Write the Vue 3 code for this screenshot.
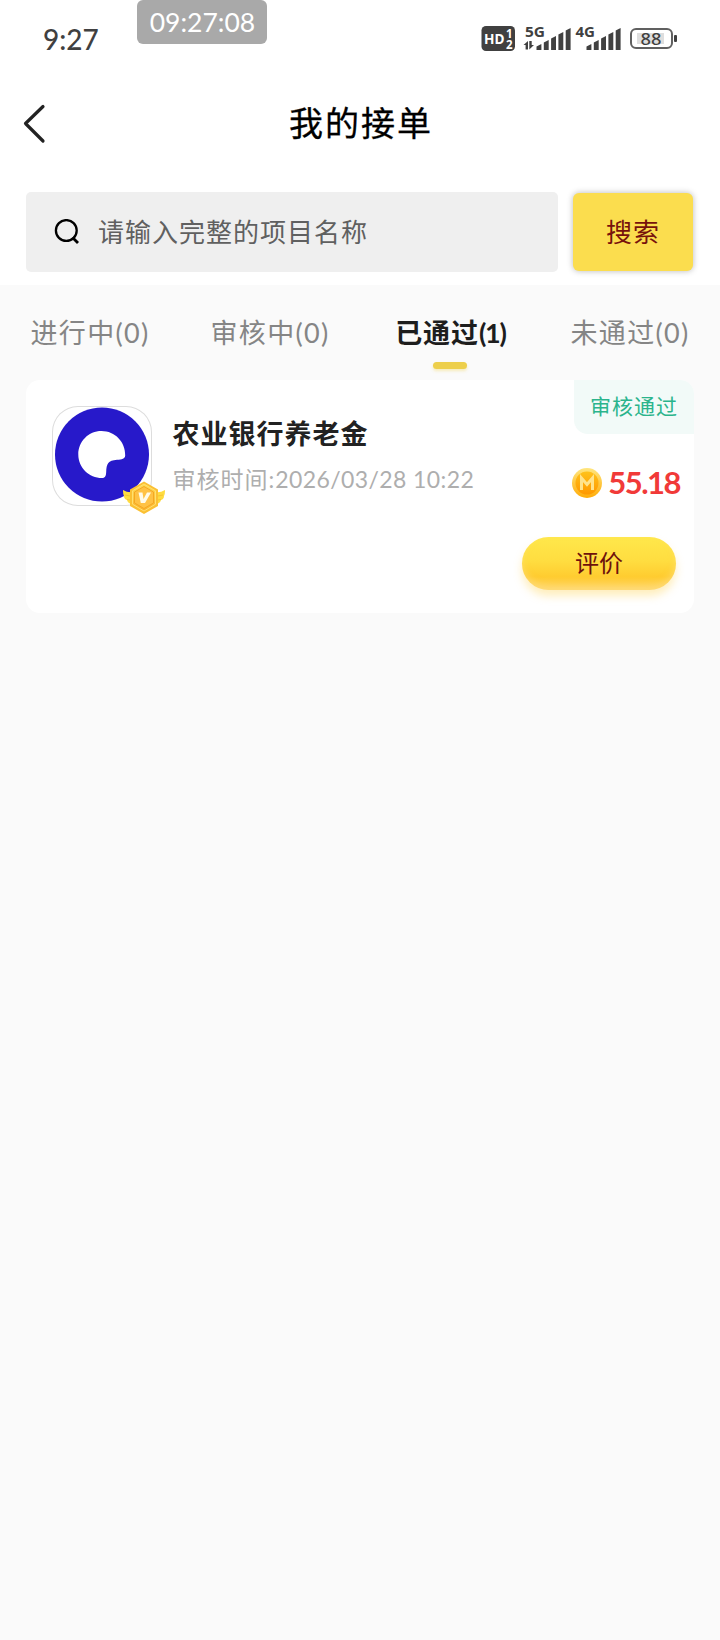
<script setup>
import { ref } from 'vue'

const tabs = [
  { label: '进行中', count: 0 },
  { label: '审核中', count: 0 },
  { label: '已通过', count: 1 },
  { label: '未通过', count: 0 },
]
const active = ref(2)
const bars = [6, 10, 14, 18, 22]
</script>

<template>
  <div class="screen">
    <header class="top">
      <div class="status">
        <span class="clock">9:27</span>
        <span class="stamp">09:27:08</span>
        <svg class="signals" width="200" height="34" viewBox="480 20 200 34">
          <rect x="481.5" y="26" width="33.5" height="25" rx="4.5" fill="#404040" />
          <g fill="#fff" font-weight="700">
            <text x="484" y="43.5" font-size="15" textLength="20.5" lengthAdjust="spacingAndGlyphs">HD</text>
            <text x="506" y="37.5" font-size="11.5">1</text>
            <text x="506" y="48.5" font-size="11.5">2</text>
          </g>
          <g fill="#404040" font-weight="700">
            <text x="525" y="37" font-size="14.5" textLength="20" lengthAdjust="spacingAndGlyphs">5G</text>
            <text x="575.5" y="37" font-size="14.5" textLength="19.5" lengthAdjust="spacingAndGlyphs">4G</text>
            <path d="M523.500 45l4.500-4v8.500h-2.400v-4.500zM529.300 41v8.500l4.700-4.500h-2.300v-4z" />
            <path v-for="(h, i) in bars" :key="'a' + i" :d="`M${536.5 + i * 7.3} 50v${-h + 2.5}l4.900-2.500v${h}z`" />
            <path v-for="(h, i) in bars" :key="'b' + i" :d="`M${586.5 + i * 7.3} 50v${-h + 2.5}l4.900-2.500v${h}z`" />
          </g>
          <rect x="631" y="29" width="41" height="19" rx="5" fill="#fff" stroke="#606060" stroke-width="2" />
          <rect x="637" y="33" width="27" height="11" fill="#dedede" />
          <rect x="674" y="35" width="3" height="7" rx="1" fill="#404040" />
          <text x="640.500" y="45" font-size="17" fill="#404040" font-weight="500" textLength="21" lengthAdjust="spacingAndGlyphs">88</text>
        </svg>
      </div>
      <div class="nav">
        <svg class="back" width="26" height="42" viewBox="0 0 26 42" fill="none" stroke="#222" stroke-width="3.2" stroke-linecap="round" stroke-linejoin="round">
          <path d="M21 3.500L3.500 20.500l17.500 17.500" />
        </svg>
        <h1>我的接单</h1>
      </div>
      <div class="search">
        <div class="field">
          <svg width="26" height="26" viewBox="0 0 26 26" fill="none" stroke="#000" stroke-width="2.3">
            <circle cx="12.300" cy="11.500" r="10.400" />
            <path d="M18.500 18.500L24 24" stroke-width="2.800" />
          </svg>
          <span>请输入完整的项目名称</span>
        </div>
        <button class="go">搜索</button>
      </div>
    </header>

    <nav class="tabs">
      <div v-for="(t, i) in tabs" :key="t.label" class="tab" :class="{ on: i === active }" @click="active = i">
        <span>{{ t.label }}<i>({{ t.count }})</i></span>
      </div>
    </nav>

    <section class="card">
      <div class="state">审核通过</div>
      <div class="row">
        <div class="logo">
          <svg width="100" height="100" viewBox="0 0 100 100">
            <circle cx="50" cy="48.500" r="47" fill="#2719ca" />
            <path d="M49.500 25C36.500 25 26.300 35.500 26.300 48.500S37 72 50 72C53.500 72 54 69.500 54.200 66C54.500 58 56 54.500 65 53.800C70 53.500 73 53 73.200 49.500C73.500 36 63 25 49.500 25z" fill="#fff" />
          </svg>
          <svg class="medal" width="42" height="34" viewBox="0 0 42 34">
            <defs>
              <linearGradient id="hex" x2="0" y2="1"><stop stop-color="#ffdc55" /><stop offset="1" stop-color="#fbb02a" /></linearGradient>
            </defs>
            <path d="M0 9q5 3 10 2v12q-5 0-6-4q-3-1-3-4q-1-2-1-5zM42 9q-5 3-10 2v12q5 0 6-4q3-1 3-4q1-2 1-5z" fill="#ffdc40" />
            <path d="M2 14l8 1.500M4 18.500l6 1M40 14l-8 1.500M38 18.500l-6 1" stroke="#f8c431" />
            <path d="M21 .5l14 8v16.500L21 33l-14-8V8.500z" fill="#fbc033" />
            <path d="M21 3l11.500 6.800v13.400L21 30l-11.500-6.800V9.800z" fill="url(#hex)" stroke="#ffe070" />
            <path d="M21 5.500l9.500 5.500v11l-9.500 5.500l-9.500-5.500V11z" fill="#ffc244" stroke="#f4a822" />
            <path d="M15.500 11.500h4l1 6.500l3.500-6.500h4l-6 10.500h-4.200z" fill="#fffbe8" />
          </svg>
        </div>
        <div class="info">
          <div class="name">农业银行养老金</div>
          <div class="time">审核时间:<b>2026/03/28 10:22</b></div>
        </div>
        <div class="price">
          <svg width="30" height="30" viewBox="0 0 30 30">
            <defs>
              <linearGradient id="rim" x2="0" y2="1"><stop stop-color="#ffe680" /><stop offset="1" stop-color="#ffac08" /></linearGradient>
              <linearGradient id="coin" x2="0" y2="1"><stop stop-color="#ffc21a" /><stop offset="1" stop-color="#ff9800" /></linearGradient>
            </defs>
            <circle cx="15" cy="15" r="15" fill="url(#rim)" />
            <circle cx="15" cy="15" r="11.500" fill="url(#coin)" />
            <path d="M9.500 22V10L15 16.500l5.500-6.500V22" fill="none" stroke="#ffe38c" stroke-width="3" />
          </svg>
          <span>55.18</span>
        </div>
      </div>
      <div class="actions"><button class="rate">评价</button></div>
    </section>
  </div>
</template>

<style>
body { background: #fafafa; }
</style>

<style scoped>
* { box-sizing: border-box; }
.screen { width: 720px; height: 1640px; background: #fafafa; font-family: Lato, "Noto Sans CJK SC", sans-serif; overflow: hidden; }
button { border: 0; padding: 0; font-family: inherit; }
svg { display: block; flex: none; }
.top { height: 285px; background: #fff; }
.status { height: 78px; display: flex; align-items: flex-start; }
.clock { margin: 22px 0 0 43px; width: 94px; font: 500 28px/34px Lato, sans-serif; color: #404040; }
.stamp { width: 130px; height: 44px; border-radius: 6px; background: #a9a9a9; color: #fff; font-size: 26.5px; line-height: 45px; text-align: center; padding-left: 1px; }
.signals { margin: 20px 0 0 213px; font-family: "Noto Sans", sans-serif; }
.nav { height: 92px; display: grid; grid-template-columns: 60px 1fr 60px; align-items: center; }
.back { margin-left: 22px; }
h1 { margin: -2px 0 0 2px; font-size: 34px; line-height: 92px; font-weight: 400; -webkit-text-stroke: .3px #000; letter-spacing: 2px; text-align: center; color: #000; }
.search { display: flex; padding: 22px 27px 0 26px; gap: 15px; align-items: center; }
.field { width: 532px; height: 80px; border-radius: 5px; background: #efefef; display: flex; align-items: center; padding-left: 28px; gap: 18px; color: #606060; font-size: 26px; letter-spacing: 1px; }
.field span { padding-bottom: 4px; }
.go { width: 120px; height: 78px; border-radius: 6px; background: #fbdd4e; color: #77120c; font-size: 26px; letter-spacing: 1px; padding-bottom: 3px; box-shadow: 0 0 6px rgba(0, 0, 0, .28); }
.tabs { height: 95px; display: grid; grid-template-columns: repeat(4, 180px); }
.tab { display: flex; flex-direction: column; align-items: center; font-size: 27px; line-height: 96px; letter-spacing: 1.3px; color: #858585; position: relative; }
.tab i { font-style: normal; }
.tab.on { color: #1d1d1d; font-weight: 700; letter-spacing: .9px; padding-left: 1px; }
.tab.on i { letter-spacing: -1.2px; }
.tab.on::after { content: ""; position: absolute; left: 73px; top: 77px; width: 34px; height: 7px; border-radius: 4px; background: #edcf4b; box-shadow: 0 2px 3px rgba(240, 208, 70, .35); }
.card { margin: 0 26px; height: 233px; border-radius: 14px; background: #fff; position: relative; padding: 26px 14px 0 26px; }
.state { position: absolute; top: 0; right: 0; width: 120px; height: 54px; border-radius: 0 14px 0 14px; background: #f2faf8; color: #2bb48c; font-size: 21px; letter-spacing: 1px; line-height: 52px; text-align: center; }
.row { display: flex; height: 131px; }
.logo { position: relative; width: 100px; height: 100px; border-radius: 26px; box-shadow: inset 0 0 0 1px #ddd; flex: none; }
.medal { position: absolute; left: 71px; top: 75px; }
.info { margin-left: 20.500px; flex: 1; white-space: nowrap; }
.name { margin-top: 8px; font-size: 27px; line-height: 40px; letter-spacing: 1px; font-weight: 700; color: #222; }
.time { margin-top: 7px; font-size: 23px; line-height: 36px; letter-spacing: 1px; color: #aeaeae; }
.time b { font-weight: 400; letter-spacing: .4px; }
.price { display: flex; align-items: center; height: 40px; margin-top: 57px; gap: 6px; color: #f13a38; font-size: 31px; font-weight: 700; }
.price span { letter-spacing: -1.500px; padding-bottom: 2px; }
.actions { display: flex; justify-content: flex-end; padding-right: 4px; }
.rate { width: 154px; height: 53px; border-radius: 27px; color: #6e120c; font-size: 24px; padding-bottom: 4px; background: linear-gradient(#ffe84b, #ffdd40 45%, #ffcc30 75%, #ffd566); box-shadow: 0 6px 8px rgba(255, 213, 90, .4), inset 0 -4px 6px rgba(255, 225, 140, .5); }
</style>
